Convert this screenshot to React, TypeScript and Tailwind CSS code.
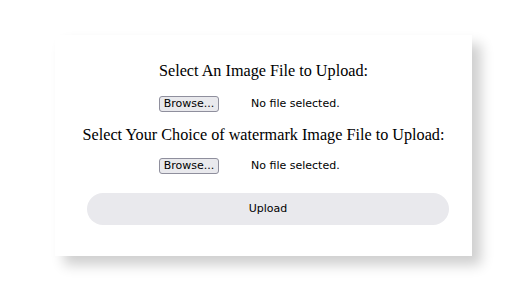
import React from 'react';

const FilePicker: React.FC = () => (
  <div className="flex items-center ml-[104px] h-[16px]">
    <button className="h-[16px] w-[60px] border border-[#8f8f9d] rounded-[3px] bg-[#e9e9ed] text-[11px] leading-[14px] text-black font-['DejaVu_Sans',sans-serif] flex items-center justify-center">
      Browse...
    </button>
    <span className="ml-[32px] text-[11px] text-black font-['DejaVu_Sans',sans-serif]">
      No file selected.
    </span>
  </div>
);

export default function App() {
  return (
    <div className="w-[521px] h-[300px] bg-white pt-[35px] pl-[55px]">
      <div className="w-[417px] h-[221px] bg-white shadow-[9px_9px_12px_#cfcfcf] flex flex-col pt-[27px]">
        <h2 className="text-center text-[16.2px] leading-[18px] text-black font-['Liberation_Serif',serif]">
          Select An Image File to Upload:
        </h2>
        <div className="mt-[16px]">
          <FilePicker />
        </div>
        <h2 className="mt-[14px] text-center text-[16.2px] leading-[18px] text-black font-['Liberation_Serif',serif]">
          Select Your Choice of watermark Image File to Upload:
        </h2>
        <div className="mt-[14px]">
          <FilePicker />
        </div>
        <button className="mt-[19px] ml-[32px] w-[362px] h-[32px] rounded-full bg-[#e9e9ed] text-[11px] text-black font-['DejaVu_Sans',sans-serif]">
          Upload
        </button>
      </div>
    </div>
  );
}
